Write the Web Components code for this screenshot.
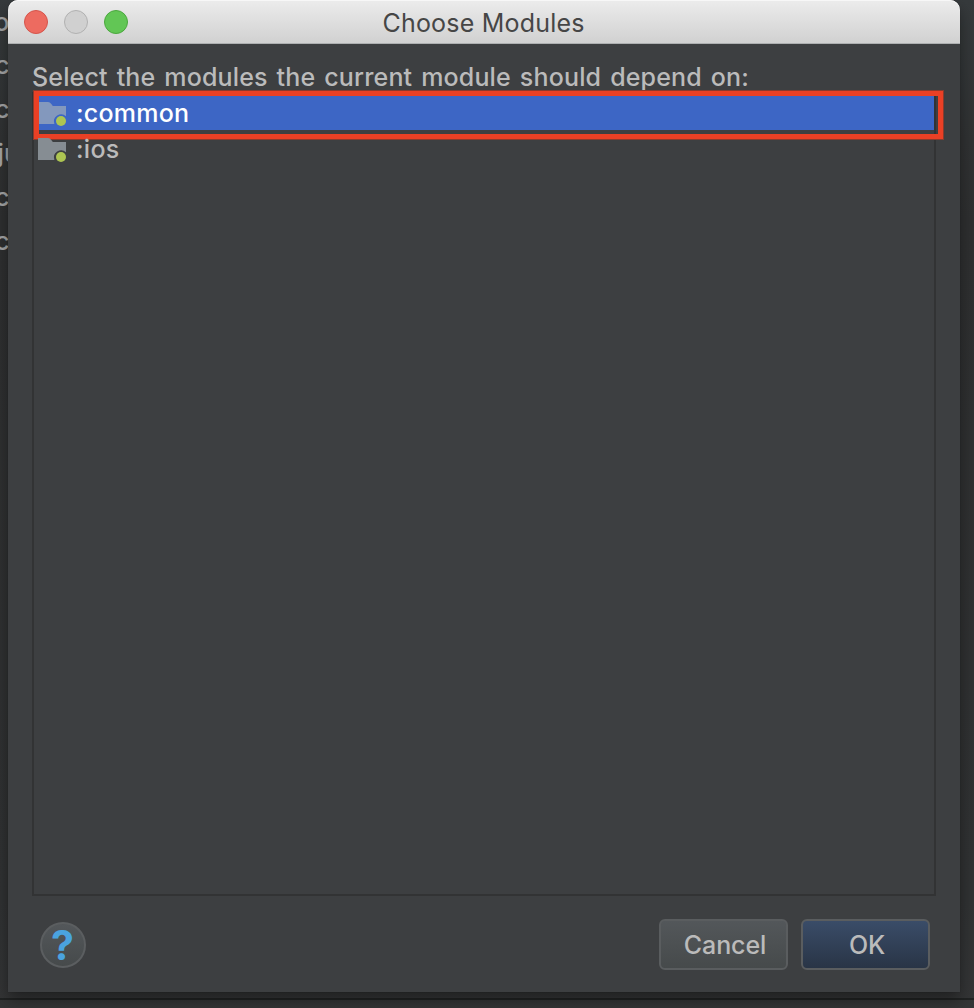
<!DOCTYPE html>
<html lang="en">
<head>
<meta charset="utf-8">
<title>Choose Modules</title>
<style>
html,body{margin:0;height:100%;overflow:hidden;background:#2d2f30}
body{font-family:Inter,"Liberation Sans",sans-serif;font-size:25px;color:#bbb}
</style>
</head>
<body>
<app-desktop>
  <editor-strip slot="behind"></editor-strip>
  <dialog-window heading="Choose Modules">
    <module-list label="Select the modules the current module should depend on:">
      <module-row selected>:common</module-row>
      <module-row>:ios</module-row>
    </module-list>
    <help-button slot="footer"></help-button>
    <push-button slot="footer">Cancel</push-button>
    <push-button slot="footer" primary>OK</push-button>
  </dialog-window>
</app-desktop>
<script>
const define = (name, html) => customElements.define(name, class extends HTMLElement {
  constructor() {
    super();
    this.attachShadow({mode: "open"}).innerHTML = html;
  }
  connectedCallback() {
    for (const el of this.shadowRoot.querySelectorAll("[data-text]"))
      el.textContent = this.getAttribute(el.dataset.text) || "";
  }
});

define("app-desktop", `
<style>
:host{display:block;position:relative;box-sizing:border-box;width:974px;height:1008px;padding:0 14px 16px 8px;overflow:hidden;
 background:linear-gradient(#202222,#202222) 0 998px/100% 2px no-repeat,linear-gradient(#363a3c,#303233 140px,#2e2f30 220px,#303233 900px,#343536)}
</style>
<slot name="behind"></slot><slot></slot>`);

define("editor-strip", `
<style>
:host{position:absolute;left:0;top:-.5px;width:9.500px;height:270px;overflow:hidden;color:#a4a5a6;font-size:25.5px;font-weight:450;line-height:44px}
div{display:flex;justify-content:flex-end;height:43.9px;white-space:nowrap}
.start{justify-content:flex-start;margin-left:-2.500px}
</style>
<div>o</div><div>c</div><div>c</div><div class="start">ju</div><div>c</div><div>c</div>`);

define("dialog-window", `
<style>
:host{display:flex;flex-direction:column;position:relative;box-sizing:border-box;width:952px;height:992px;background:#3d3f41;border-radius:10px 10px 0 0;
 box-shadow:0 0 1px 0 rgba(0,0,0,.45),0 8px 16px rgba(0,0,0,.38)}
header{display:grid;grid-template-columns:1fr auto 1fr;align-items:center;box-sizing:border-box;height:44px;flex:none;padding:0 16px;border-radius:10px 10px 0 0;
 background:linear-gradient(#ececec,#d1d1d1);border-bottom:1px solid #aeb0b1;box-shadow:inset 0 1px #f7f7f7}
.lights{display:flex;gap:16px}
i{box-sizing:border-box;width:24px;height:24px;border-radius:50%;background:#ed6b60;border:1px solid #d5544b}
i:nth-child(2){background:#d0d0d0;border-color:#b1b1b1}
i:nth-child(3){background:#62c655;border-color:#4ba73e}
h1{margin:2px 1px 0 0;font-size:25px;font-weight:420;line-height:40px;color:#464646;letter-spacing:.2px;white-space:nowrap}
main{flex:1;min-height:0;padding:15px 24px 0;display:flex}
footer{display:flex;flex:none;height:96px;padding:23px 30px 0 31.5px;box-sizing:border-box;gap:13px;align-items:flex-start}
</style>
<header><div class="lights"><i></i><i></i><i></i></div><h1 data-text="heading"></h1><span></span></header>
<main><slot></slot></main>
<footer><slot name="footer"></slot></footer>`);

define("module-list", `
<style>
:host{display:flex;flex-direction:column;width:904px}
label{display:block;height:33px;line-height:36px;white-space:nowrap;font-weight:450;letter-spacing:.16px;word-spacing:2.1px}
.box{flex:1;border:2px solid #323334;background:#3d3f41}
</style>
<label data-text="label"></label><div class="box"><slot></slot></div>`);

define("module-row", `
<style>
:host{display:flex;position:relative;align-items:center;height:36px;padding-left:4px;gap:9px;line-height:36px;font-weight:460;letter-spacing:.25px}
:host([selected]){background:#3d66c5;color:#fff;--folder:#8398bd}
svg{display:block;width:29px;height:26px;flex:none;margin-top:2px}
span{padding-top:1px}
.mark{display:none;position:absolute;left:0;top:-3.5px;width:899px;height:38px;border:5px solid #ea4025;outline:.5px solid #8b3a2c}
:host([selected]) .mark{display:block}
</style>
<svg viewBox="0 0 29 26"><path fill="var(--folder,#868d93)" d="M0 2h10q2 0 3.300 2l1.500 2H28v10.200A7.200 7.200 0 0 0 16.400 24H0z"/><circle cx="23" cy="21" r="5" fill="#adc552"/></svg>
<span><slot></slot></span><div class="mark"></div>`);

define("push-button", `
<style>
:host{display:block;box-sizing:border-box;width:129px;height:51px;margin-top:0;border:2px solid #5a5d5f;border-radius:6px;background:linear-gradient(#53575a,#464a4b);text-align:center;line-height:48px;padding-left:3px;font-weight:450;letter-spacing:-.1px}
:host([primary]){background:linear-gradient(#3a4c68,#293546)}
</style><slot></slot>`);

define("help-button", `
<style>
:host{display:flex;justify-content:center;align-items:center;box-sizing:border-box;width:46px;height:46px;margin:2.5px auto 0 0;border:2px solid #5b5e60;border-radius:50%;background:linear-gradient(#53575a,#464a4b);color:#4aa3df;font-weight:700;font-size:41px;line-height:42px}
</style><span>?</span>`);
</script>
</body>
</html>
